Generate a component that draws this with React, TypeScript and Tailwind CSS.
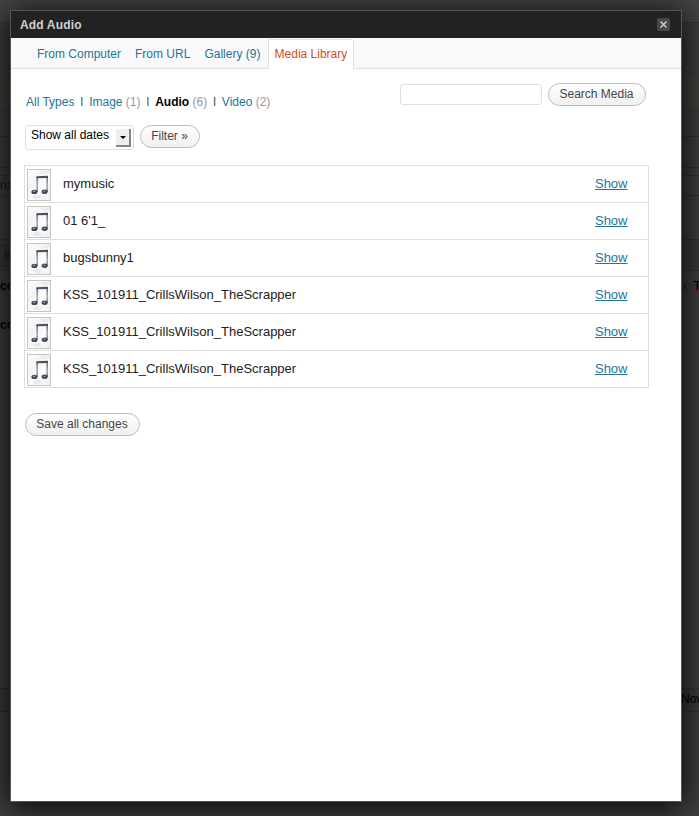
import React from 'react';

const items = [
  'mymusic',
  "01 6'1_",
  'bugsbunny1',
  'KSS_101911_CrillsWilson_TheScrapper',
  'KSS_101911_CrillsWilson_TheScrapper',
  'KSS_101911_CrillsWilson_TheScrapper',
];

function MusicThumb() {
  return (
    <svg width="24" height="32" viewBox="0 0 24 32" className="block">
      <defs>
        <linearGradient id="paper" x1="0" y1="0" x2="1" y2="1">
          <stop offset="0" stopColor="#ffffff" />
          <stop offset="0.35" stopColor="#f3f3f4" />
          <stop offset="0.6" stopColor="#fdfdfd" />
          <stop offset="1" stopColor="#ededee" />
        </linearGradient>
        <linearGradient id="stem" x1="0" y1="0" x2="0" y2="1">
          <stop offset="0" stopColor="#6a7280" />
          <stop offset="0.6" stopColor="#a6abb4" />
          <stop offset="1" stopColor="#7b828e" />
        </linearGradient>
      </defs>
      <rect x="0.5" y="0.5" width="23" height="31" fill="url(#paper)" stroke="#c4c4c4" />
      <path d="M14 2.5L23 1.5V4L17 5.5Z" fill="#ebebec" />
      <ellipse cx="10" cy="28" rx="4.5" ry="2" fill="#e9eaec" />
      <rect x="9.4" y="8" width="1.6" height="15" fill="url(#stem)" />
      <rect x="19.4" y="7.5" width="1.6" height="15.5" fill="url(#stem)" />
      <path d="M9.4 7.2L21 6.8V8.9L9.4 9.3Z" fill="#4a5260" />
      <ellipse cx="7.4" cy="22.9" rx="3" ry="2.2" fill="#3f4857" />
      <ellipse cx="17.6" cy="22.7" rx="3" ry="2.2" fill="#3f4857" />
      <path d="M6.2 22.4h1.8M16.4 22.2h1.8" stroke="#a7afbb" strokeWidth="1.1" />
    </svg>
  );
}

function Button({ children, className }: { children: React.ReactNode; className: string }) {
  return (
    <button
      className={`block h-[23px] shrink-0 rounded-full border border-[#bbb] bg-linear-to-b from-white to-[#f0f0f0] pr-px pb-px text-center text-[12px] leading-[20px] whitespace-nowrap text-[#464646] ${className}`}
    >
      {children}
    </button>
  );
}

function Backdrop() {
  return (
    <div className="h-[816px] bg-[#3e3e3e] text-[12px] text-[#111]">
      <div className="h-[23px] border-b border-[#343434] bg-[#444]" />
      <div className="h-[52px]" />
      <div className="h-[35px] border-y border-[#3d3b1c] bg-[#40413a]" />
      <div className="h-[27px] border-b border-[#303030]" />
      <div className="h-[31px] border-b border-[#303030]" />
      <div className="h-[7px]" />
      <div className="h-[21px] border-y border-[#303030] leading-[18px]">na</div>
      <div className="h-[44px] border-b border-[#303030]" />
      <div className="h-[31px] border-b border-[#303030] bg-[#393939] pt-[5px]">
        <div className="h-[21px] w-10 border-y border-[#2b2b2b] pl-[4px] leading-[18px]">li</div>
      </div>
      <div className="flex h-[39px] justify-between pt-[6px] leading-[18px]">
        <span className="font-bold text-black">co</span>
        <span className="flex w-[20px] gap-[7px] self-start text-[13px] text-black">
          <span className="h-[17px] border-b-2 border-dotted border-[#a01414] leading-[18px] text-[#12203c]">n</span>
          <span className="h-[17px] border-b-2 border-dotted border-[#a01414] leading-[18px]">T</span>
        </span>
      </div>
      <div className="h-[378px] pt-[6px] font-bold leading-[18px] text-black">co</div>
      <div className="flex h-[24px] justify-end border-y border-[#303030] bg-[#3b3b3b] leading-[21px] text-black">
        <span className="w-[18px]">Nov</span>
      </div>
    </div>
  );
}

const tabs = ['From Computer', 'From URL', 'Gallery (9)'];

export default function App() {
  return (
    <div className="relative h-[816px] w-[699px] overflow-hidden font-['Liberation_Sans',Arial,sans-serif]">
      <Backdrop />
      <div className="absolute top-[10px] left-[10px] flex h-[792px] w-[672px] flex-col border border-[#555] bg-white text-[12px] shadow-[0_4px_30px_#000]">
        <header className="flex h-[27px] shrink-0 items-center justify-between bg-[#222] pr-[11px] pl-[9px]">
          <h1 className="font-bold tracking-[0.16px] text-[#cfcfcf]">Add Audio</h1>
          <button className="flex size-[13px] items-center justify-center rounded-[2px] bg-[#484848]">
            <svg width="7" height="7" viewBox="0 0 7 7">
              <path d="M0.5 0.5L6.5 6.5M6.5 0.5L0.5 6.5" stroke="#d4d4d4" strokeWidth="1.3" />
            </svg>
          </button>
        </header>
        <nav className="flex h-[31px] shrink-0 items-end border-b border-[#dfdfdf] bg-[#f9f9f9] pl-[26px] text-[#21759b]">
          <div className="flex gap-[14px] leading-[28px]">
            {tabs.map((t) => (
              <a key={t} className="whitespace-nowrap">{t}</a>
            ))}
          </div>
          <a className="-mb-px ml-[8px] h-[30px] w-[86px] rounded-t-[3px] border border-b-0 border-[#dfdfdf] bg-white pr-px text-center leading-[28px] whitespace-nowrap text-[#d54e21]">
            Media Library
          </a>
        </nav>
        <main className="flex flex-col pr-[32px] pl-[13px]">
          <div className="flex h-[52px] items-start pt-[14px] pl-px">
            <div className="flex grow pt-[12px] pl-px leading-[14px] whitespace-nowrap text-[#21759b]">
              <a>All Types</a>
              <span className="mr-[6px] ml-[6px] text-[#444]">l</span>
              <a>Image <span className="text-[#999]">(1)</span></a>
              <span className="mr-[6px] ml-[6px] text-[#444]">l</span>
              <a><b className="text-black">Audio</b> <span className="text-[#999]">(6)</span></a>
              <span className="mr-[6px] ml-[6px] text-[#444]">l</span>
              <a>Video <span className="text-[#999]">(2)</span></a>
            </div>
            <input className="mt-px mr-[6px] h-[21px] w-[142px] rounded-[3px] border border-[#dfdfdf] bg-white" />
            <Button className="mr-[3px] w-[98px]">Search Media</Button>
          </div>
          <div className="flex h-[44px] gap-[6px] pt-[4px] pl-px">
            <div className="flex h-[25px] w-[109px] justify-between rounded-[3px] border border-[#dfdfdf] pr-[2px] pl-[5px] leading-[18px] whitespace-nowrap text-black">
              <span>Show all dates</span>
              <span className="mt-[3px] flex h-[18px] w-[15px] items-center justify-center border-r-2 border-b-2 border-[#858585] bg-[#efefef]">
                <svg width="6" height="3" viewBox="0 0 6 3"><path d="M0 0H6L3 3Z" fill="#000" /></svg>
              </span>
            </div>
            <Button className="w-[60px]">Filter »</Button>
          </div>
          <div className="w-[625px] border border-b-0 border-[#dfdfdf]">
            {items.map((name, i) => (
              <div key={i} className="flex h-[37px] border-b border-[#dfdfdf] pl-[2px] text-[13px] leading-[35px]">
                <div className="w-[36px] pt-[3px]"><MusicThumb /></div>
                <span className="grow text-[#222]">{name}</span>
                <a className="mr-[20.5px] text-[#21759b] underline">Show</a>
              </div>
            ))}
          </div>
          <div className="pt-[25px] pl-px">
            <Button className="w-[115px]">Save all changes</Button>
          </div>
        </main>
      </div>
    </div>
  );
}
